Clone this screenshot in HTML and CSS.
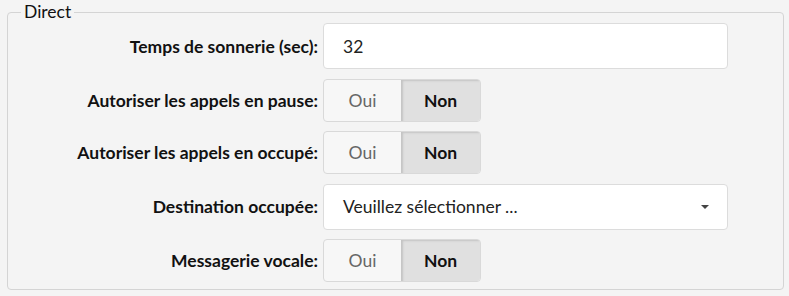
FILE: index.html
```html
<!DOCTYPE html>
<html lang="fr">
<head>
<meta charset="utf-8">
<link rel="stylesheet" href="styles.css">
</head>
<body>
<fieldset class="group">
  <legend class="group-title">Direct</legend>
  <div class="row">
    <label class="label">Temps de sonnerie (sec):</label>
    <div class="field"><div class="input">32</div></div>
  </div>
  <div class="row">
    <label class="label">Autoriser les appels en pause:</label>
    <div class="field"><div class="toggle"><span class="opt">Oui</span><span class="opt active">Non</span></div></div>
  </div>
  <div class="row">
    <label class="label">Autoriser les appels en occupé:</label>
    <div class="field"><div class="toggle"><span class="opt">Oui</span><span class="opt active">Non</span></div></div>
  </div>
  <div class="row">
    <label class="label">Destination occupée:</label>
    <div class="field"><div class="input select"><span>Veuillez sélectionner ...</span><span class="caret"></span></div></div>
  </div>
  <div class="row">
    <label class="label">Messagerie vocale:</label>
    <div class="field"><div class="toggle"><span class="opt">Oui</span><span class="opt active">Non</span></div></div>
  </div>
</fieldset>
</body>
</html>
```
FILE: styles.css
```css
html, body {
  margin: 0;
  padding: 0;
  background: #f4f4f4;
  font-family: Lato, "Liberation Sans", sans-serif;
  color: #222;
}
.group {
  margin: 1px 5px 0 7px;
  padding: 0 55px 7px 13px;
  border: 1px solid #d4d4d4;
  border-radius: 4px;
  display: flex;
  flex-direction: column;
  gap: 9.5px;
}
.group-title {
  padding: 0 3px;
  font-size: 17.5px;
  line-height: 22px;
  color: #111;
}
.row {
  display: flex;
  align-items: center;
}
.label {
  width: 297px;
  padding-right: 5px;
  text-align: right;
  font-weight: bold;
  font-size: 17.5px;
  color: #111;
  white-space: nowrap;
}
.field {
  flex: 1;
}
.input {
  box-sizing: border-box;
  height: 46px;
  background: #fff;
  border: 1px solid #dcdcdc;
  border-radius: 4px;
  padding: 0 19px;
  display: flex;
  align-items: center;
  font-size: 17.5px;
  color: #222;
}
.select {
  justify-content: space-between;
}
.caret {
  width: 0;
  height: 0;
  border-left: 4.5px solid transparent;
  border-right: 4.5px solid transparent;
  border-top: 4.5px solid #444;
  margin-right: -1px;
}
.toggle {
  display: inline-flex;
  height: 43px;
  box-sizing: border-box;
  border: 1px solid #d9d9d9;
  border-radius: 4px;
  overflow: hidden;
  background: #f7f7f7;
}
.opt {
  width: 77px;
  display: flex;
  align-items: center;
  justify-content: center;
  font-size: 17.5px;
  color: #666;
}
.opt.active {
  width: 79px;
  background: #e0e0e0;
  color: #111;
  font-weight: bold;
  box-shadow: inset 3px 2px 2px -1px #c4c4c4;
}
```
